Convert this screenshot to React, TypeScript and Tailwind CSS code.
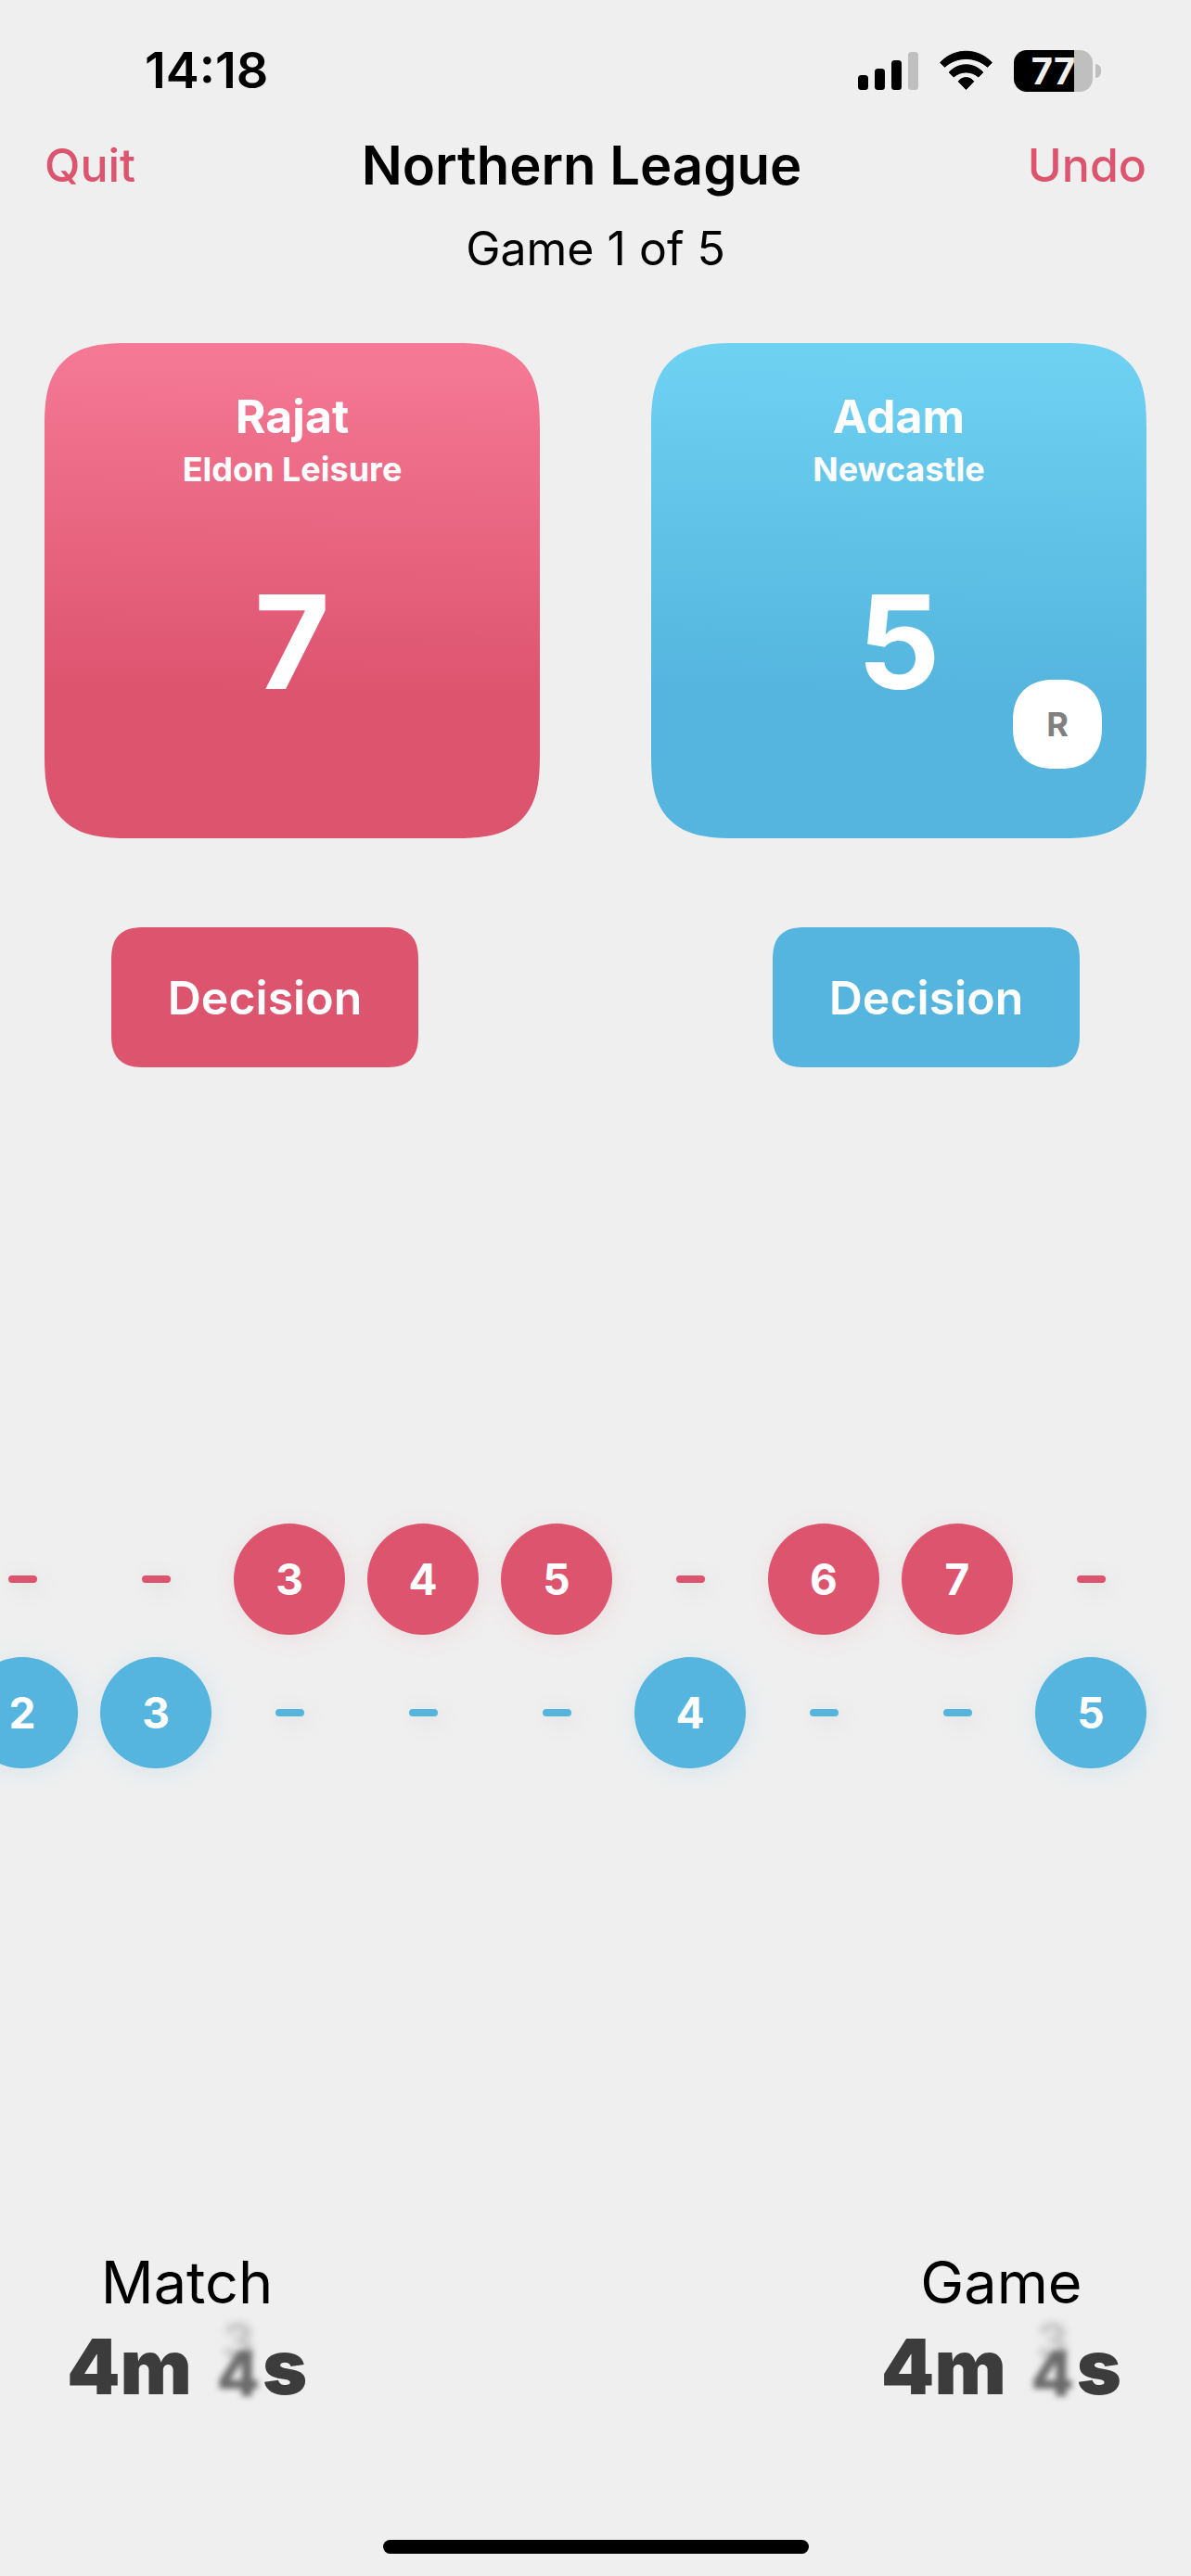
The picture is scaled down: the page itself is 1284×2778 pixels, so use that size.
const RALLIES: { home?: number; away?: number }[] = [
  { away: 2 },
  { away: 3 },
  { home: 3 },
  { home: 4 },
  { home: 5 },
  { away: 4 },
  { home: 6 },
  { home: 7 },
  { away: 5 },
];

function StatusBar() {
  return (
    <div className="flex h-[128px] items-center justify-between pt-[24px] pr-[97px] pl-[156px]">
      <time className="text-[54px] leading-[54px] font-semibold">14:18</time>
      <div className="flex items-center">
        <svg className="mr-[23px] h-[45px] w-[65px]" viewBox="0 0 65 45" aria-label="Signal strength">
          <rect x="0" y="27" width="11" height="16" rx="3.5" />
          <rect x="18" y="20" width="11" height="23" rx="3.5" />
          <rect x="36" y="11" width="11" height="32" rx="3.5" />
          <rect x="54" y="2" width="11" height="41" rx="3.5" fill="#bfbfbf" />
        </svg>
        <svg
          className="mr-[23px] h-[45px] w-[57px]"
          viewBox="0 0 57 45"
          stroke="#000"
          strokeWidth="1"
          strokeLinejoin="round"
          aria-label="Wi-Fi"
        >
          <path d="M0.6 13.5 C16 -2.8 41 -2.8 56.4 13.5 L51.5 18.3 C38.5 6.500 18.500 6.500 5.500 18.300 Z" />
          <path d="M10.200 24 C20.500 13 36.500 13 46.800 24 L41.800 29 C34 22.300 23 22.300 15.200 29 Z" />
          <path d="M20.200 33.800 C24.500 28.200 32.500 28.200 36.800 33.800 L28.500 42.500 Z" />
        </svg>
        <div className="flex h-[45px] w-[85px] items-center justify-center rounded-[14px] bg-[linear-gradient(90deg,#000_77%,#bfbfbf_77%)]">
          <span className="text-[40px] leading-[45px] font-bold text-[#efefef]">77</span>
        </div>
        <div className="ml-[3px] h-[15px] w-[6px] rounded-r-full bg-[#bfbfbf]" />
      </div>
    </div>
  );
}

function PlayerCard({
  name,
  club,
  score,
  serve,
  tone,
}: {
  name: string;
  club: string;
  score: number;
  serve?: string;
  tone: string;
}) {
  return (
    <section
      className={`relative flex aspect-square flex-col items-center rounded-[72px] pt-[54px] text-white supports-[corner-shape:squircle]:rounded-[92px] [corner-shape:superellipse(1.5)] ${tone}`}
    >
      <h2 className="text-[50px] leading-[50px] font-bold">{name}</h2>
      <p className="mt-[13px] text-[36px] leading-[38px] font-bold">{club}</p>
      <button
        type="button"
        aria-label={`Add point for ${name}`}
        className="mt-[97px] text-[140px] leading-[140px] font-bold"
      >
        {score}
      </button>
      {serve && (
        <button
          type="button"
          aria-label="Service side"
          className="absolute right-12 bottom-[75px] flex size-24 items-center justify-center rounded-[40px] bg-white text-[36px] leading-[36px] font-bold text-[#808080] supports-[corner-shape:squircle]:rounded-[44px] [corner-shape:superellipse(1.2)]"
        >
          {serve}
        </button>
      )}
    </section>
  );
}

function DecisionButton({ tone }: { tone: string }) {
  return (
    <button
      type="button"
      className={`h-[151px] w-[331px] rounded-[30px] text-[50px] leading-[50px] font-semibold text-white supports-[corner-shape:squircle]:rounded-[36px] [corner-shape:superellipse(1.4)] ${tone}`}
    >
      Decision
    </button>
  );
}

function Point({ value, disc, dash }: { value?: number; disc: string; dash: string }) {
  return (
    <div className="flex size-[120px] items-center justify-center">
      {value === undefined ? (
        <span
          className={`h-2 w-[31px] rounded-full shadow-[6px_6px_24px_rgba(0,0,0,0.1),-4px_-4px_24px_rgba(0,0,0,0.04)] ${dash}`}
        />
      ) : (
        <span
          className={`flex size-full items-center justify-center rounded-full text-[46px] leading-[46px] font-bold text-white ${disc}`}
        >
          {value}
        </span>
      )}
    </div>
  );
}

function Timer({ label }: { label: string }) {
  return (
    <section className="flex flex-col items-center">
      <h3 className="text-[63px] leading-[76px]">{label}</h3>
      <p className="mt-3 flex text-[82px] leading-[84px] font-black text-[#3c3c3c]">
        <span>4m</span>
        <span className="relative ml-6 w-[52px] text-center text-[68px] leading-[96px] text-[#6a6a6a]">
          <span className="absolute inset-x-0 -top-[34px] text-[54px] font-bold text-[#bdbdbd] blur-[4px]">3</span>
          <span className="relative font-extrabold blur-[3px]">4</span>
        </span>
        <span>s</span>
      </p>
    </section>
  );
}

export default function App() {
  return (
    <main className="flex min-h-screen flex-col overflow-x-clip bg-[#efefef] font-['Inter',sans-serif] text-black">
      <StatusBar />
      <header className="flex h-[100px] items-center justify-between px-12">
        <button type="button" className="text-[50px] leading-[60px] font-medium text-[#dd546f]">
          Quit
        </button>
        <h1 className="text-[58px] leading-[60px] font-semibold">Northern League</h1>
        <button type="button" className="text-[50px] leading-[60px] font-medium text-[#dd546f]">
          Undo
        </button>
      </header>
      <p className="text-center text-[50px] leading-[80px]">Game 1 of 5</p>

      <div className="mt-[62px] grid grid-cols-2 gap-[120px] px-12">
        <PlayerCard
          name="Rajat"
          club="Eldon Leisure"
          score={7}
          tone="bg-[linear-gradient(181deg,#f67a96_0%,#dd546f_70%)]"
        />
        <PlayerCard
          name="Adam"
          club="Newcastle"
          score={5}
          serve="R"
          tone="bg-[linear-gradient(181deg,#70d2f3_0%,#55b5de_70%)]"
        />
      </div>

      <div className="mt-24 flex justify-between px-[120px]">
        <DecisionButton tone="bg-[#dd546f]" />
        <DecisionButton tone="bg-[#55b5de]" />
      </div>

      <div className="flex flex-1 items-center justify-end gap-6 px-12">
        {RALLIES.map((rally, i) => (
          <div key={i} className="flex shrink-0 flex-col gap-6">
            <Point
              value={rally.home}
              disc="bg-[#dd546f] shadow-[2px_3px_24px_rgba(221,84,111,0.12)]"
              dash="bg-[#dd546f]"
            />
            <Point
              value={rally.away}
              disc="bg-[#55b5de] shadow-[2px_3px_24px_rgba(85,181,222,0.16)]"
              dash="bg-[#55b5de]"
            />
          </div>
        ))}
      </div>

      <div className="flex justify-between pt-[24px] pr-[75px] pl-[72px]">
        <Timer label="Match" />
        <Timer label="Game" />
      </div>
      <div className="mx-auto mt-[132px] mb-6 h-[15px] w-[459px] rounded-full bg-black" />
    </main>
  );
}
